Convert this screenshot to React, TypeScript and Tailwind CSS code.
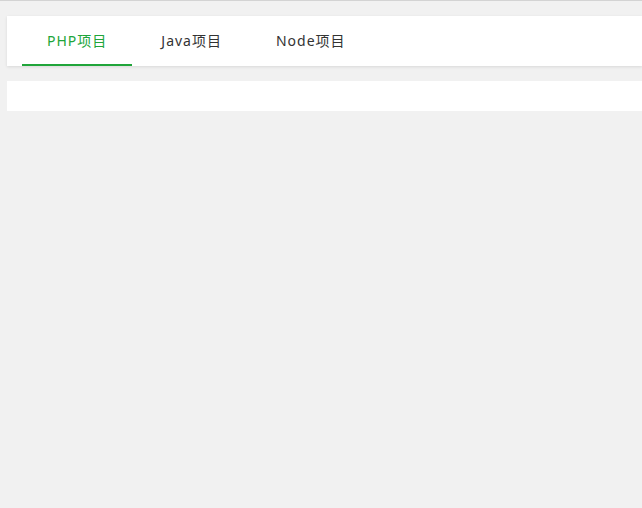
const tabs = ['PHP项目', 'Java项目', 'Node项目'];

const App = () => {
  const active = 0;

  return (
    <div
      className="min-h-screen w-full border-t border-[#d3d3d3] bg-[#f1f1f1] pl-[7px] pt-[15px]"
      style={{ fontFamily: '"Noto Sans", "Noto Sans CJK SC", sans-serif' }}
    >
      {/* 탭 바 */}
      <div className="flex h-[50px] gap-[4px] bg-white pl-[15px] shadow-[0_1px_3px_rgba(0,0,0,0.1)]">
        {tabs.map((tab, i) => (
          <div
            key={tab}
            className={`box-border h-[50px] cursor-pointer border-b-2 px-[25px] text-[14px] leading-[50px] tracking-[1px] ${
              i === active ? 'border-[#20a53a] text-[#20a53a]' : 'border-transparent text-[#333]'
            }`}
          >
            {tab}
          </div>
        ))}
      </div>

      {/* 내용 영역 */}
      <div className="mt-[15px] h-[30px] bg-white" />
    </div>
  );
};

export default App;
